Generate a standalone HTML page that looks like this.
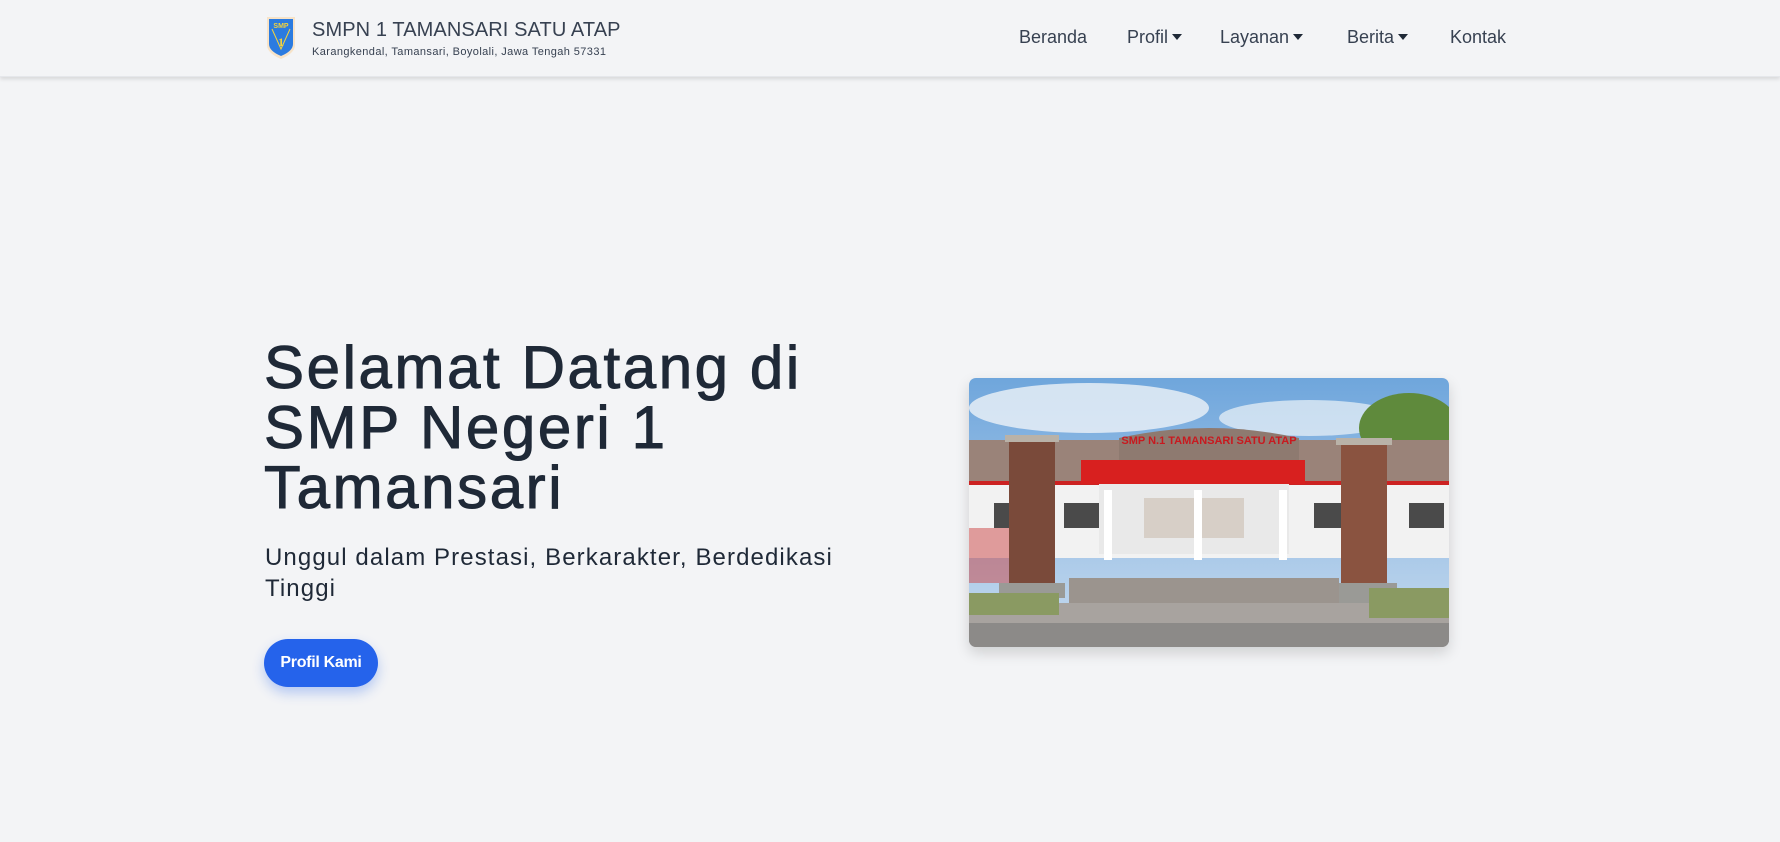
<!DOCTYPE html>
<html><head><meta charset="utf-8"><style>
*{margin:0;padding:0;box-sizing:border-box}
body{width:1780px;height:842px;background:#f3f4f6;font-family:"Liberation Sans",sans-serif;position:relative;overflow:hidden;color:#1f2937}
.hdr{position:absolute;left:0;top:0;width:1780px;height:77px;background:#f3f4f6;box-shadow:0 2px 4px rgba(0,0,0,.12);border-bottom:1px solid #e5e7eb}
.t1{position:absolute;left:312px;top:19px;font-size:20px;font-weight:500;color:#374151;letter-spacing:.1px}
.t2{position:absolute;left:312px;top:46px;font-size:11px;color:#374151;letter-spacing:.4px}
.nav{position:absolute;top:27px;font-size:18px;color:#374151}
.car{display:inline-block;width:0;height:0;border-left:5px solid transparent;border-right:5px solid transparent;border-top:6px solid #1f2937;margin-left:4px;vertical-align:middle;position:relative;top:-1px}
h1{position:absolute;left:264px;top:338px;width:640px;font-size:60px;line-height:60px;font-weight:normal;color:#1f2937;letter-spacing:2.6px;-webkit-text-stroke:1px #1f2937}
.sub{position:absolute;left:265px;top:542px;width:600px;font-size:24px;line-height:31px;color:#1f2937;letter-spacing:1.1px}
.btn{position:absolute;left:264px;top:639px;width:114px;height:48px;border-radius:24px;background:#2563eb;color:#fff;font-weight:bold;font-size:16px;text-align:center;line-height:48px;box-shadow:0 6px 12px rgba(37,99,235,.3);letter-spacing:-0.3px}
.img{position:absolute;left:969px;top:378px;width:480px;height:269px;border-radius:7px;overflow:hidden;box-shadow:0 6px 14px rgba(0,0,0,.15)}
</style></head><body>
<div class="hdr">
<svg style="position:absolute;left:265px;top:15px" width="32" height="45" viewBox="0 0 32 45">
<path d="M2 2 H30 V30 Q30 38 16 44 Q2 38 2 30 Z" fill="#f7e3c8"/>
<path d="M4 4 H28 V29 Q28 36 16 41 Q4 36 4 29 Z" fill="#2b7be0"/>
<path d="M7 14 L16 34 L25 14" fill="none" stroke="#f5d33b" stroke-width="1"/>
<text x="16" y="13" font-size="7" fill="#f5d33b" text-anchor="middle" font-weight="bold" font-family="Liberation Sans">SMP</text>
<text x="16" y="31" font-size="12" fill="#f5d33b" text-anchor="middle" font-weight="bold" font-family="Liberation Serif">1</text>
</svg>
<div class="t1">SMPN 1 TAMANSARI SATU ATAP</div>
<div class="t2">Karangkendal, Tamansari, Boyolali, Jawa Tengah 57331</div>
<div class="nav" style="left:1019px">Beranda</div>
<div class="nav" style="left:1127px">Profil<span class="car"></span></div>
<div class="nav" style="left:1220px">Layanan<span class="car"></span></div>
<div class="nav" style="left:1347px">Berita<span class="car"></span></div>
<div class="nav" style="left:1450px">Kontak</div>
</div>
<h1>Selamat Datang di<br>SMP Negeri 1<br>Tamansari</h1>
<div class="sub">Unggul dalam Prestasi, Berkarakter, Berdedikasi<br>Tinggi</div>
<div class="btn">Profil Kami</div>
<div class="img">
<svg width="480" height="269" viewBox="0 0 480 269">
<defs><linearGradient id="sk" x1="0" y1="0" x2="0" y2="1"><stop offset="0" stop-color="#6fa6dc"/><stop offset="1" stop-color="#c9dcef"/></linearGradient></defs>
<rect width="480" height="269" fill="url(#sk)"/>
<ellipse cx="120" cy="30" rx="120" ry="25" fill="#eef3f8" opacity=".8"/>
<ellipse cx="340" cy="40" rx="90" ry="18" fill="#eef3f8" opacity=".7"/>
<ellipse cx="440" cy="50" rx="50" ry="35" fill="#5f8a3c"/>
<rect x="0" y="62" width="480" height="45" fill="#9a8379"/>
<path d="M150 60 Q240 40 330 60 V90 H150 Z" fill="#8e7a70"/>
<text x="240" y="66" font-size="11" fill="#c8191f" text-anchor="middle" font-weight="bold" font-family="Liberation Sans">SMP N.1 TAMANSARI SATU ATAP</text>
<rect x="0" y="105" width="480" height="75" fill="#f2f2f2"/>
<rect x="0" y="103" width="480" height="4" fill="#c22"/>
<rect x="112" y="82" width="224" height="24" fill="#d8201f"/>
<rect x="130" y="106" width="190" height="70" fill="#e9e9e9"/>
<rect x="175" y="120" width="100" height="40" fill="#d7cfc7"/>
<g fill="#4a4a4a"><rect x="25" y="125" width="20" height="25"/><rect x="95" y="125" width="35" height="25"/><rect x="345" y="125" width="35" height="25"/><rect x="440" y="125" width="35" height="25"/></g>
<rect x="135" y="112" width="8" height="70" fill="#fff"/><rect x="225" y="112" width="8" height="70" fill="#fff"/><rect x="310" y="112" width="8" height="70" fill="#fff"/>
<rect x="40" y="57" width="46" height="160" fill="#7a4a3a"/>
<rect x="36" y="57" width="54" height="7" fill="#b9b2a8"/>
<rect x="30" y="205" width="66" height="15" fill="#9a9a96"/>
<rect x="372" y="60" width="46" height="158" fill="#8a5340"/>
<rect x="367" y="60" width="56" height="7" fill="#b9b2a8"/>
<rect x="362" y="205" width="66" height="20" fill="#9a9a96"/>
<rect x="0" y="150" width="40" height="55" fill="#c44" opacity=".5"/>
<rect x="100" y="200" width="270" height="32" fill="#9b948e"/>
<rect x="0" y="225" width="480" height="44" fill="#a8a39f"/>
<rect x="0" y="215" width="90" height="22" fill="#8a9a62"/>
<rect x="400" y="210" width="80" height="30" fill="#8a9a62"/>
<rect x="0" y="245" width="480" height="24" fill="#8c8a88"/>
</svg>
</div>
</body></html>
